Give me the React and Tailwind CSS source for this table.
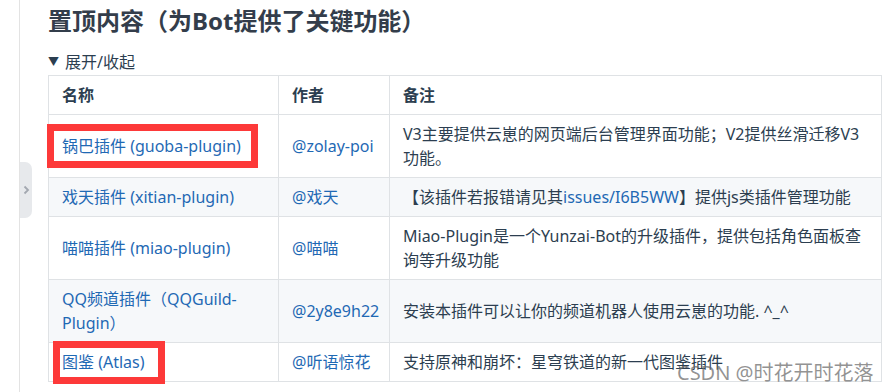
import React from 'react';

const rows = [
  {
    name: '锅巴插件 (guoba-plugin)',
    author: '@zolay-poi',
    note: 'V3主要提供云崽的网页端后台管理界面功能；V2提供丝滑迁移V3功能。',
  },
  {
    name: '戏天插件 (xitian-plugin)',
    author: '@戏天',
    note: (
      <>
        【该插件若报错请见其<span className="text-[#1f69b4]">issues/I6B5WW</span>】提供js类插件管理功能
      </>
    ),
  },
  {
    name: '喵喵插件 (miao-plugin)',
    author: '@喵喵',
    note: 'Miao-Plugin是一个Yunzai-Bot的升级插件，提供包括角色面板查询等升级功能',
  },
  {
    name: 'QQ频道插件（QQGuild-Plugin）',
    author: '@2y8e9h22',
    note: '安装本插件可以让你的频道机器人使用云崽的功能. ^_^',
  },
  {
    name: '图鉴 (Atlas)',
    author: '@听语惊花',
    note: '支持原神和崩坏：星穹铁道的新一代图鉴插件',
  },
];

export default function App() {
  return (
    <div
      className="relative w-[884px] h-[392px] overflow-hidden bg-white text-[#2c3e50]"
      style={{ fontFamily: '"Noto Sans", "Noto Sans CJK SC", sans-serif' }}
    >
      <div className="ml-[19px] h-full border-l border-[#e3e3e3] pl-[28px] pt-[5px]">
        <h2 className="text-[24px] leading-8 font-bold text-[#333d4b]">置顶内容（为Bot提供了关键功能）</h2>

        <div className="mt-[13px] text-[16px] leading-6 flex items-center">
          <span className="text-[11px] mr-[6px]">▼</span>
          <span>展开/收起</span>
        </div>

        {/* table + markup boxes */}
        <div className="relative mt-[1px]">
          <table className="table-fixed border-collapse w-[834px] text-[16px] leading-6">
            <colgroup>
              <col className="w-[230px]" />
              <col className="w-[111px]" />
              <col />
            </colgroup>
            <thead>
              <tr>
                <th className="border border-[#dfe2e5] px-[13px] py-[7px] text-left font-bold">名称</th>
                <th className="border border-[#dfe2e5] px-[13px] py-[7px] text-left font-bold">作者</th>
                <th className="border border-[#dfe2e5] px-[13px] py-[7px] text-left font-bold">备注</th>
              </tr>
            </thead>
            <tbody>
              {rows.map((r, i) => (
                <tr key={i} className={i % 2 === 1 ? 'bg-[#f6f8fa]' : 'bg-white'}>
                  <td className="border border-[#dfe2e5] px-[13px] py-[7px] text-[#1f69b4]">{r.name}</td>
                  <td className="border border-[#dfe2e5] px-[13px] py-[7px] text-[#1f69b4]">{r.author}</td>
                  <td className="border border-[#dfe2e5] px-[13px] py-[7px]">{r.note}</td>
                </tr>
              ))}
            </tbody>
          </table>

          <div className="absolute left-[-1px] top-[49px] w-[211px] h-[44px] border-[7px] border-[#fd3939]" />
          <div className="absolute left-[5px] top-[266px] w-[112px] h-[43px] border-[7px] border-[#fd3939]" />
        </div>
      </div>

      {/* sidebar toggle */}
      <div className="absolute left-[20px] top-[162px] w-[12px] h-[56px] rounded-r-[7px] bg-[#e7e9ec] flex items-center justify-center">
        <svg width="7" height="10" viewBox="0 0 7 10" fill="none">
          <path d="M1.5 1.5 L5 5 L1.5 8.5" stroke="#a3a8b0" strokeWidth="1.8" />
        </svg>
      </div>

      {/* watermark */}
      <div className="absolute left-[677px] top-[359px] text-[20px] leading-7 text-[rgba(105,105,105,0.72)] whitespace-nowrap">
        CSDN @时花开时花落
      </div>
    </div>
  );
}
